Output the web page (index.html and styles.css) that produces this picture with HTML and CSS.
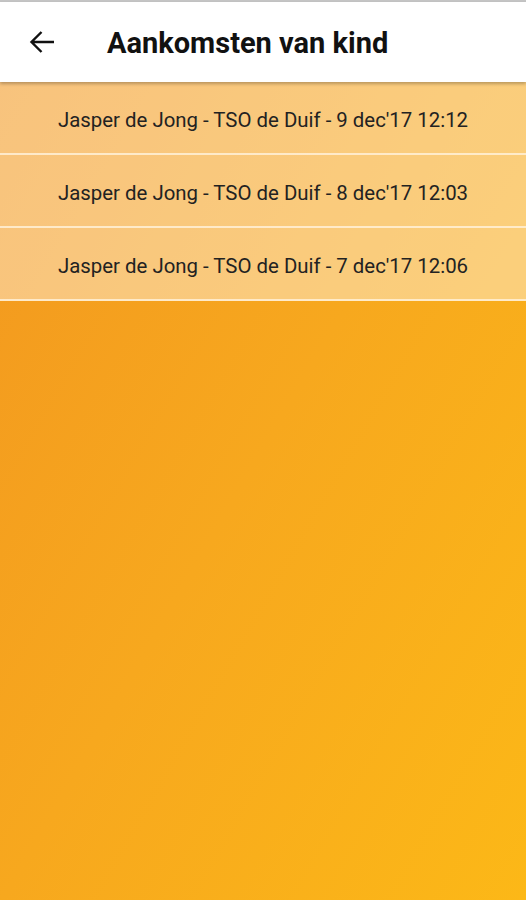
FILE: index.html
```html
<!DOCTYPE html>
<html lang="nl">
<head>
    <meta charset="UTF-8">
    <meta name="viewport" content="width=device-width, initial-scale=1.0">
    <title>Aankomsten van kind</title>
    <link rel="stylesheet" href="styles.css">
</head>
<body>
    <section class="screen">
        <div class="statusbar"></div>
        <header class="appbar">
            <button class="back" aria-label="Terug">
                <svg width="28" height="28" viewBox="0 0 28 28">
                    <path d="M26 14H3.5M13.5 4L3.5 14l10 10" fill="none" stroke="#111" stroke-width="2.4"/>
                </svg>
            </button>
            <h1>Aankomsten van kind</h1>
        </header>
        <ul class="list">
            <li class="item">Jasper de Jong - TSO de Duif - 9 dec'17 12:12</li>
            <li class="item">Jasper de Jong - TSO de Duif - 8 dec'17 12:03</li>
            <li class="item">Jasper de Jong - TSO de Duif - 7 dec'17 12:06</li>
        </ul>
    </section>
</body>
</html>
```

FILE: styles.css
```css
*{
    margin: 0;
    padding: 0;
    box-sizing: border-box;
    font-family: Roboto, "Liberation Sans", sans-serif;
}
.screen{
    min-height: 100vh;
    width: 100%;
    background: linear-gradient(120deg, #f2961f 0%, #f7a81e 50%, #fcb817 100%);
}
.statusbar{
    height: 2px;
    background-color: #c4c4c4;
}
.appbar{
    position: relative;
    z-index: 1;
    height: 80px;
    display: flex;
    align-items: center;
    background-color: #fff;
    box-shadow: 0 2px 3px rgba(0, 0, 0, 0.25);
}
.back{
    width: 28px;
    height: 28px;
    margin-left: 28px;
    margin-right: 51px;
    border: none;
    background: none;
    display: flex;
}
.appbar h1{
    font-size: 29px;
    font-weight: 700;
    color: #111;
    padding-top: 2px;
}
.list{
    list-style: none;
}
.item{
    height: 73px;
    display: flex;
    justify-content: center;
    align-items: center;
    padding-top: 5px;
    font-size: 20.4px;
    color: #222;
    background-color: rgba(255, 255, 255, 0.42);
    border-bottom: 2px solid rgba(255, 240, 215, 0.85);
}
```
